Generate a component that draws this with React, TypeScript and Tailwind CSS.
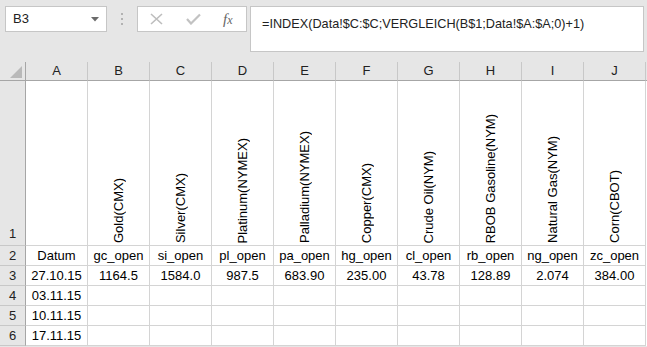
import React from "react";

const cols = ["A", "B", "C", "D", "E", "F", "G", "H", "I", "J"];

const titles = [
  "",
  "Gold(CMX)",
  "Silver(CMX)",
  "Platinum(NYMEX)",
  "Palladium(NYMEX)",
  "Copper(CMX)",
  "Crude Oil(NYM)",
  "RBOB Gasoline(NYM)",
  "Natural Gas(NYM)",
  "Corn(CBOT)",
];

const rows: string[][] = [
  ["Datum", "gc_open", "si_open", "pl_open", "pa_open", "hg_open", "cl_open", "rb_open", "ng_open", "zc_open"],
  ["27.10.15", "1164.5", "1584.0", "987.5", "683.90", "235.00", "43.78", "128.89", "2.074", "384.00"],
  ["03.11.15", "", "", "", "", "", "", "", "", ""],
  ["10.11.15", "", "", "", "", "", "", "", "", ""],
  ["17.11.15", "", "", "", "", "", "", "", "", ""],
];

function FormulaBar() {
  return (
    <div className="h-[62px] flex items-start pt-[6px] pl-[5px]">
      {/* Name box */}
      <div className="w-[102px] h-[26px] bg-white border border-[#c6c6c6] flex items-center justify-between pl-[7px] pr-[7px]">
        <span className="text-[13px] text-[#222]">B3</span>
        <svg width="8" height="5" viewBox="0 0 8 5">
          <path d="M0 0 L8 0 L4 4.5 Z" fill="#6b6b6b" />
        </svg>
      </div>

      <div className="w-[30px] h-[26px] flex flex-col items-center justify-center gap-[3px]">
        <span className="w-[2px] h-[2px] bg-[#b2b2b2]" />
        <span className="w-[2px] h-[2px] bg-[#b2b2b2]" />
        <span className="w-[2px] h-[2px] bg-[#b2b2b2]" />
      </div>

      {/* Cancel / Enter / fx */}
      <div className="w-[110px] h-[26px] bg-white border border-[#c6c6c6] flex items-center pl-[12px]">
        <svg width="13" height="12" viewBox="0 0 13 12">
          <path d="M1 1 L12 11 M12 1 L1 11" stroke="#bdbdbd" strokeWidth="1.6" fill="none" />
        </svg>
        <svg width="15" height="12" viewBox="0 0 15 12" className="ml-[23px]">
          <path d="M1 6 L5 10.5 L14 1.5" stroke="#c2c2c2" strokeWidth="2.2" fill="none" />
        </svg>
        <span className="ml-[22px] italic text-[15px] text-[#666] leading-none font-['Liberation_Serif',serif]">
          f<span className="text-[12px]">x</span>
        </span>
      </div>

      {/* Formula input */}
      <div className="ml-[3px] w-[394px] h-[46px] bg-white border border-[#c6c6c6] pl-[11px] pt-[4px]">
        <span className="text-[12.7px] text-[#222] leading-[20px]">
          =INDEX(Data!$C:$C;VERGLEICH(B$1;Data!$A:$A;0)+1)
        </span>
      </div>
    </div>
  );
}

export default function App() {
  return (
    <div className="w-[647px] h-[347px] overflow-hidden bg-[#e6e6e6] font-['Liberation_Sans',Arial,sans-serif] text-[#222]">
      <FormulaBar />

      {/* Column headers */}
      <div className="flex h-[19px]">
        <div className="w-[26px] h-[19px] shrink-0 border-r border-b border-[#a6a6a6] flex items-end justify-end pr-[3px] pb-[2px]">
          <svg width="12" height="12" viewBox="0 0 12 12">
            <path d="M12 0 L12 12 L0 12 Z" fill="#b9b9b9" />
          </svg>
        </div>
        {cols.map((c) => (
          <div
            key={c}
            className="w-[62px] h-[19px] shrink-0 border-r border-b border-r-[#c8c8c8] border-b-[#a6a6a6] flex items-center justify-center text-[13px] text-[#222]"
          >
            {c}
          </div>
        ))}
        <div className="flex-1 h-[19px] border-b border-[#a6a6a6]" />
      </div>

      {/* Row 1 with rotated titles */}
      <div className="flex h-[165px]">
        <div className="w-[26px] shrink-0 border-r border-b border-r-[#a6a6a6] border-b-[#c8c8c8] flex items-end justify-center pb-[2px] text-[13px] text-[#222]">
          1
        </div>
        {titles.map((t, i) => (
          <div
            key={i}
            className="w-[62px] shrink-0 bg-white border-r border-b border-[#d4d4d4] flex items-end justify-center pb-[2px]"
          >
            {t && (
              <span className="[writing-mode:vertical-rl] rotate-180 text-[13px] leading-[15px] text-black whitespace-nowrap">
                {t}
              </span>
            )}
          </div>
        ))}
        <div className="flex-1 bg-white" />
      </div>

      {/* Data rows */}
      {rows.map((r, ri) => (
        <div key={ri} className="flex h-[20px]">
          <div className="w-[26px] shrink-0 border-r border-b border-r-[#a6a6a6] border-b-[#c8c8c8] flex items-center justify-center text-[13px] text-[#222]">
            {ri + 2}
          </div>
          {r.map((v, ci) => (
            <div
              key={ci}
              className="w-[62px] shrink-0 bg-white border-r border-b border-[#d4d4d4] flex items-center justify-center text-[13px] text-black whitespace-nowrap"
            >
              {v}
            </div>
          ))}
          <div className="flex-1 bg-white" />
        </div>
      ))}
    </div>
  );
}
